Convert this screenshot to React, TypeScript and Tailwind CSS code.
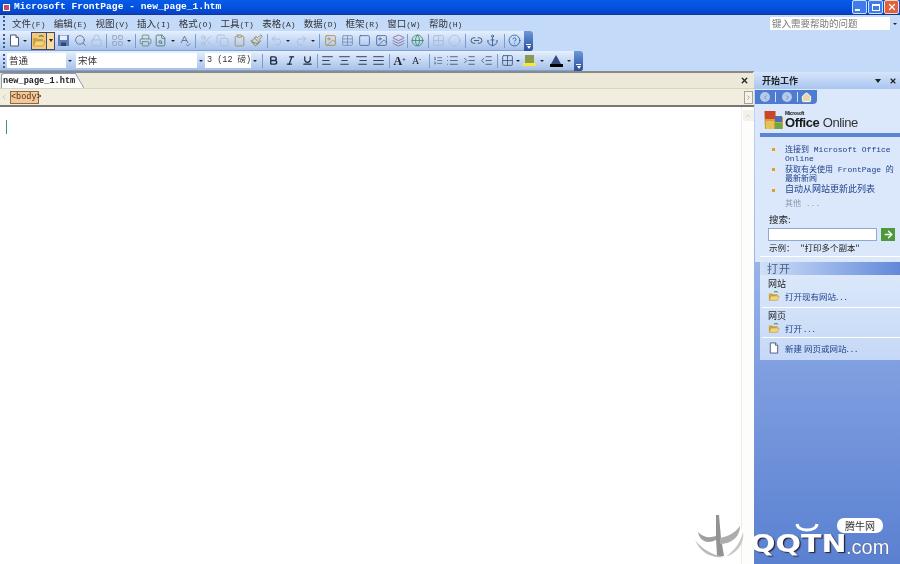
import React from "react";
import {
  Search, Printer, Scissors, Copy, Clipboard, Paintbrush, Undo2, Redo2, Table, Image, Globe,
  Anchor, HelpCircle, Bold, Italic, Underline, AlignLeft, AlignCenter, AlignRight, AlignJustify,
  List, ListOrdered, Indent, Outdent, X, ChevronRight, ChevronLeft, ChevronUp, Home,
  ArrowRight, Layers, Lock, SpellCheck, FileSearch, Grid2x2, Link2, Circle, LayoutGrid, Square,
} from "lucide-react";

const menus = [
  ["文件", "F"], ["编辑", "E"], ["视图", "V"], ["插入", "I"], ["格式", "O"], ["工具", "T"],
  ["表格", "A"], ["数据", "D"], ["框架", "R"], ["窗口", "W"], ["帮助", "H"],
];

const Grip = () => (
  <div className="flex flex-col gap-[2px] w-[3px] ml-[3px] mr-[1px] shrink-0">
    {[0, 1, 2, 3].map((i) => <span key={i} className="w-[2px] h-[2px] bg-[#3a5a9a]" />)}
  </div>
);

const Sep = ({ w = 10 }: { w?: number }) => (
  <div className="flex justify-center shrink-0" style={{ width: w }}>
    <span className="w-px h-[14px] bg-[#7a9ad0]" />
  </div>
);

const Arrow = ({ w = 7 }: { w?: number }) => (
  <div className="flex justify-center items-center shrink-0" style={{ width: w }}>
    <span className="w-0 h-0 border-l-[2px] border-r-[2px] border-t-[2px] border-l-transparent border-r-transparent border-t-[#223]" />
  </div>
);

const Slot = ({ w = 17, children }: { w?: number; children: React.ReactNode }) => (
  <div className="flex justify-center items-center shrink-0 h-[16px]" style={{ width: w }}>{children}</div>
);

const DocIcon = ({ size = 13 }: { size?: number }) => (
  <svg width={size} height={size} viewBox="0 0 13 13">
    <path d="M2.5 1h5.5l2.5 2.5V12h-8z" fill="#fff" stroke="#4a5a78" />
    <path d="M8 1v2.5h2.5" fill="#dfe6f2" stroke="#4a5a78" />
  </svg>
);

const FolderIcon = ({ size = 14 }: { size?: number }) => (
  <svg width={size} height={size} viewBox="0 0 14 14">
    <path d="M1 4h4l1 1h5v2H4L2 12H1z" fill="#c9a548" />
    <path d="M3.5 7H13l-2 5H1.5z" fill="#f4d67a" stroke="#b08a35" strokeWidth=".6" />
    <path d="M7 2.5c2-1.4 3.5-1 4.5.5" fill="none" stroke="#3f8f46" strokeWidth="1.2" />
  </svg>
);

const SaveIcon = () => (
  <svg width="13" height="13" viewBox="0 0 13 13">
    <path d="M1 1h11v11H1z" fill="#5f7fb8" />
    <path d="M3 1.5h7v4.5H3z" fill="#e6eefb" />
    <path d="M4 8.5h5V12H4z" fill="#33466e" />
  </svg>
);

const EndGrip = ({ h = 20 }: { h?: number }) => (
  <div className="w-[9px] flex flex-col justify-end items-center pb-[2px] bg-gradient-to-b from-[#6f98dc] to-[#2a4f9a] rounded-r-[3px] shrink-0" style={{ height: h }}>
    <span className="w-[5px] h-px bg-white mb-px" />
    <span className="w-0 h-0 border-l-[2px] border-r-[2px] border-t-[3px] border-l-transparent border-r-transparent border-t-white" />
  </div>
);

const Combo = ({ w, text, mono }: { w: number; text: string; mono?: boolean }) => (
  <div className="flex items-center shrink-0">
    <div className={`bg-white h-[15px] pl-[2px] leading-[15px] text-[#333] whitespace-nowrap ${mono ? "text-[8.5px] font-['Liberation_Mono','Noto_Sans_CJK_SC',monospace]" : "text-[9.5px]"}`} style={{ width: w }}>{text}</div>
    <Arrow w={8} />
  </div>
);

const ic = { size: 13, strokeWidth: 1.6 };

export default function App() {
  return (
    <div className="relative w-[900px] h-[564px] overflow-hidden bg-[#c3daf9] flex flex-col font-['Noto_Sans_CJK_SC','Liberation_Sans',sans-serif] blur-[0.5px]">
      {/* title bar */}
      <div className="h-[15px] shrink-0 flex items-center bg-gradient-to-b from-[#0a5ae6] via-[#0054e0] to-[#0a3fc4] border-b border-[#0b3a9c]">
        <div className="w-[9px] h-[9px] ml-[2px] mr-[3px] bg-white border border-[#2a4f9a] flex items-center justify-center">
          <span className="w-[5px] h-[5px] bg-[#c64a6a]" />
        </div>
        <span className="text-white font-bold text-[9.6px] font-['Liberation_Mono',monospace] whitespace-pre">Microsoft FrontPage - new_page_1.htm</span>
        <div className="ml-auto flex gap-[1px] pr-[1px]">
          <div className="w-[15px] h-[14px] rounded-[2px] bg-[#3f7cea] border border-[#cfe0ff] flex items-end pl-[2px] pb-[2px]"><span className="w-[5px] h-[2px] bg-white" /></div>
          <div className="w-[15px] h-[14px] rounded-[2px] bg-[#3f7cea] border border-[#cfe0ff] flex items-center justify-center"><span className="w-[8px] h-[7px] border border-white border-t-2" /></div>
          <div className="w-[15px] h-[14px] rounded-[2px] bg-[#e0623c] border border-[#ffd9c8] flex items-center justify-center"><X size={10} strokeWidth={3} color="#fff" /></div>
        </div>
      </div>

      {/* menu bar */}
      <div className="h-[16px] shrink-0 flex items-center">
        <Grip />
        <div className="flex ml-[5px] mt-px">
          {menus.map(([t, k]) => (
            <span key={k} className="w-[41.7px] text-[9.5px] leading-[16px] text-[#333] whitespace-nowrap">{t}<span className="font-['Liberation_Mono',monospace] text-[8px]">({k})</span></span>
          ))}
        </div>
        <div className="ml-auto flex items-center mr-[1px] mt-px">
          <div className="w-[120px] h-[13px] bg-white text-[9.5px] leading-[13px] pl-[2px] text-[#777] whitespace-nowrap">键入需要帮助的问题</div>
          <Arrow w={9} />
        </div>
      </div>

      {/* standard toolbar */}
      <div className="h-[20px] w-[533px] shrink-0 flex items-center bg-gradient-to-b from-[#e6f0fd] to-[#a5c1ea] rounded-r-[3px] border-b border-[#7f9fd6]">
        <Grip />
        <Slot w={14}><DocIcon /></Slot>
        <Arrow w={8} />
        <div className="ml-[2px] w-[16px] h-[18px] bg-[#f8c878] border border-[#3a4a7a] flex items-center justify-center"><FolderIcon /></div>
        <div className="w-[8px] h-[18px] bg-[#fbdc9e] border border-l-0 border-[#3a4a7a] flex items-center justify-center"><span className="w-0 h-0 border-l-[2px] border-r-[2px] border-t-[3px] border-l-transparent border-r-transparent border-t-[#222]" /></div>
        <Slot w={17}><SaveIcon /></Slot>
        <Slot w={16}><Search {...ic} color="#5c7098" /></Slot>
        <Slot w={16}><Lock {...ic} color="#a9bbd8" /></Slot>
        <Sep w={5} />
        <Slot w={16}><LayoutGrid {...ic} color="#8fa2c2" /></Slot>
        <Arrow w={8} />
        <Sep w={5} />
        <Slot w={14}><Printer {...ic} color="#6a8a7a" /></Slot>
        <Slot w={17}><FileSearch {...ic} color="#4a7a6a" /></Slot>
        <Arrow w={7} />
        <Slot w={17}><SpellCheck {...ic} color="#5a6a9a" /></Slot>
        <Sep w={5} />
        <Slot w={16}><Scissors {...ic} color="#a9bbd8" /></Slot>
        <Slot w={17}><Copy {...ic} color="#a9bbd8" /></Slot>
        <Slot w={17}><Clipboard {...ic} color="#a08a50" /></Slot>
        <Slot w={17}><Paintbrush {...ic} color="#8a7a30" /></Slot>
        <Sep w={4} />
        <Slot w={14}><Undo2 {...ic} color="#a9bbd8" /></Slot>
        <Arrow w={10} />
        <Slot w={16}><Redo2 {...ic} color="#a9bbd8" /></Slot>
        <Arrow w={7} />
        <Sep w={6} />
        <Slot w={17}><Image {...ic} color="#b08a40" /></Slot>
        <Slot w={17}><Table {...ic} color="#7a8fb8" /></Slot>
        <Slot w={17}><Square {...ic} color="#4a6aa8" /></Slot>
        <Slot w={17}><Image {...ic} color="#4a6a98" /></Slot>
        <Slot w={16}><Layers {...ic} color="#8a6a98" /></Slot>
        <Sep w={3} />
        <Slot w={16}><Globe {...ic} color="#3a8a6a" /></Slot>
        <Sep w={6} />
        <Slot w={14}><Grid2x2 {...ic} color="#a9bbd8" /></Slot>
        <Slot w={18}><Circle {...ic} color="#a9bbd8" /></Slot>
        <Sep w={5} />
        <Slot w={16}><Link2 {...ic} color="#334a6a" /></Slot>
        <Slot w={17}><Anchor {...ic} color="#3a5a8a" /></Slot>
        <Sep w={6} />
        <Slot w={15}><HelpCircle {...ic} color="#2a5aa8" /></Slot>
        <div className="ml-auto"><EndGrip /></div>
      </div>

      {/* formatting toolbar */}
      <div className="h-[20px] w-[583px] shrink-0 flex items-center bg-gradient-to-b from-[#e6f0fd] to-[#a5c1ea] rounded-r-[3px] border-b border-[#7f9fd6]">
        <Grip />
        <Combo w={59} text="普通" />
        <span className="w-[2px] shrink-0" />
        <Combo w={121} text="宋体" />
        <Combo w={46} text="3 (12 磅)" mono />
        <Sep w={6} />
        <Slot w={17}><Bold size={11} strokeWidth={3} color="#1f2a44" /></Slot>
        <Slot w={17}><Italic size={11} strokeWidth={2.6} color="#1f2a44" /></Slot>
        <Slot w={17}><Underline size={11} strokeWidth={2.6} color="#1f2a44" /></Slot>
        <Sep w={3} />
        <Slot w={17}><AlignLeft {...ic} color="#1f2a44" /></Slot>
        <Slot w={17}><AlignCenter {...ic} color="#1f2a44" /></Slot>
        <Slot w={17}><AlignRight {...ic} color="#1f2a44" /></Slot>
        <Slot w={17}><AlignJustify {...ic} color="#1f2a44" /></Slot>
        <Sep w={4} />
        <Slot w={17}><span className="font-['Liberation_Serif',serif] font-bold text-[12px] text-[#223]">A<sup className="text-[6px]">+</sup></span></Slot>
        <Slot w={17}><span className="font-['Liberation_Serif',serif] text-[10px] text-[#223]">A<sup className="text-[6px]">-</sup></span></Slot>
        <Sep w={8} />
        <Slot w={10}><ListOrdered {...ic} color="#44587c" /></Slot>
        <Slot w={18}><List {...ic} color="#44587c" /></Slot>
        <Slot w={17}><Indent {...ic} color="#44587c" /></Slot>
        <Slot w={17}><Outdent {...ic} color="#44587c" /></Slot>
        <Sep w={5} />
        <Slot w={15}><Grid2x2 {...ic} color="#44587c" /></Slot>
        <Arrow w={6} />
        <Slot w={17}>
          <div className="flex flex-col items-center">
            <span className="w-[9px] h-[8px] bg-[#8a9a50]" />
            <span className="w-[13px] h-[3px] bg-[#f5e83a]" />
          </div>
        </Slot>
        <Arrow w={8} />
        <Slot w={20}>
          <div className="flex flex-col items-center">
            <span className="w-0 h-0 border-l-[5px] border-r-[5px] border-b-[9px] border-l-transparent border-r-transparent border-b-[#334a7a]" />
            <span className="w-[13px] h-[3px] bg-black" />
          </div>
        </Slot>
        <Arrow w={6} />
        <div className="ml-auto"><EndGrip /></div>
      </div>

      {/* main */}
      <div className="flex-1 flex min-h-0">
        {/* editor */}
        <div className="w-[754px] flex flex-col border-t-2 border-[#8b8b86]">
          <div className="h-[16px] bg-[#ece9d8] flex items-end relative border-b border-[#d8d4c0]">
            <div className="h-[15px] w-[74px] ml-[1px] bg-white border-t border-l border-[#8c9ab0] rounded-tl-[3px] text-[8.6px] font-bold leading-[14px] pl-[1px] font-['Liberation_Mono',monospace] text-[#222] whitespace-pre">new_page_1.htm</div>
            <svg width="9" height="15" viewBox="0 0 9 15" className="shrink-0"><path d="M0 0L9 15H0z" fill="#fff" /><path d="M0 0L9 15" stroke="#8c9ab0" fill="none" /></svg>
            <X size={9} strokeWidth={3.5} color="#222" className="absolute right-[5px] top-[3px]" />
          </div>
          <div className="h-[16px] bg-[#f1eee0] flex items-center">
            <ChevronLeft size={8} color="#b5b3a5" />
            <div className="ml-[2px] h-[13px] w-[29px] bg-[#f5c89a] border border-[#8a6a4a] text-[8.5px] leading-[11px] text-center text-[#4a2a10] font-['Liberation_Mono',monospace]">&lt;body&gt;</div>
            <div className="ml-auto w-[9px] h-[13px] mr-[1px] bg-[#f5f3ea] border border-[#a5a399] flex items-center justify-center"><ChevronRight size={7} color="#666" /></div>
          </div>
          <div className="h-[2px] bg-[#77776f]" />
          <div className="flex-1 bg-white flex relative">
            <div className="flex-1 pt-[13px] pl-[6px]"><span className="block w-px h-[14px] bg-[#4a8a8a]" /></div>
            <div className="w-[13px] bg-[#fdfdfb] border-l border-[#eeeeea] flex flex-col items-center pt-[3px]">
              <div className="w-[11px] h-[11px] bg-[#f3f1ea] flex items-center justify-center"><ChevronUp size={8} color="#c5c3b8" /></div>
            </div>
          </div>
        </div>

        {/* task pane */}
        <div className="w-[146px] flex flex-col bg-gradient-to-b from-[#c8dcf8] via-[#7f9fe0] via-[60%] to-[#5a80d0] pl-[6px] pt-[1px]">
          <div className="h-[17px] -ml-[7px] flex items-center bg-gradient-to-b from-[#d5e5fb] to-[#a9c5ef] shrink-0">
            <span className="text-[9px] font-bold text-[#222] ml-[9px] whitespace-nowrap">开始工作</span>
            <span className="ml-auto mr-[8px] w-0 h-0 border-l-[3px] border-r-[3px] border-t-[4px] border-l-transparent border-r-transparent border-t-[#222]" />
            <X size={8} strokeWidth={3.5} color="#222" className="mr-[3px]" />
          </div>
          <div className="bg-[#dbe8fb] shrink-0 h-[173px] -ml-[5px] pl-[5px] flex flex-col">
            <div className="h-[14px] w-[62px] -ml-[5px] bg-[#4e7bd0] rounded-br-[4px] flex items-center mt-[1px] pl-[5px] gap-[3px]">
              <span className="w-[10px] h-[10px] rounded-full bg-[#b5c9e8] flex items-center justify-center"><ChevronLeft size={7} color="#6a88b8" strokeWidth={3} /></span>
              <span className="ml-[2px] w-px h-[10px] bg-[#cfe0fb]" />
              <span className="ml-[3px] w-[10px] h-[10px] rounded-full bg-[#b5c9e8] flex items-center justify-center"><ChevronRight size={7} color="#6a88b8" strokeWidth={3} /></span>
              <span className="ml-[2px] w-px h-[10px] bg-[#cfe0fb]" />
              <Home size={11} color="#fff" fill="#e8d8a8" />
            </div>
            <div className="flex items-center pl-[4px] mt-[5px] h-[22px]">
              <svg width="20" height="22" viewBox="0 0 20 22" className="shrink-0">
                <path d="M0 2h12v6h7v12H1z" fill="#d2a23a" />
                <path d="M1 2h10v8H1z" fill="#c9452e" />
                <path d="M11 7h7v6h-7z" fill="#4a6fb8" />
                <path d="M2 12h8v8H2z" fill="#e5c25a" />
                <path d="M11 14h7v6h-7z" fill="#6aa84a" />
              </svg>
              <div className="flex flex-col ml-[1px] text-[#1a1a1a] font-['Liberation_Sans',sans-serif] tracking-[-0.4px]">
                <span className="text-[5px] leading-[5px] font-bold">Microsoft</span>
                <span className="text-[13px] leading-[14px] whitespace-nowrap"><b className="font-semibold">Office</b> <span className="text-[#333]">Online</span></span>
              </div>
            </div>
            <div className="h-[4px] bg-[#5b85d2] mt-[2px]" />
            <div className="mt-[8px] pl-[25px] text-[8px] leading-[9px] text-[#21438c] relative whitespace-nowrap font-['Liberation_Mono','Noto_Sans_CJK_SC',monospace]">
              <span className="absolute left-[12px] top-[3px] w-[3px] h-[3px] bg-[#e89a2a]" />
              <div className="h-[20px]">连接到 Microsoft Office<br />Online</div>
              <span className="absolute left-[12px] top-[23px] w-[3px] h-[3px] bg-[#e89a2a]" />
              <div className="h-[21px]">获取有关使用 FrontPage 的<br />最新新闻</div>
              <span className="absolute left-[12px] top-[44px] w-[3px] h-[3px] bg-[#e89a2a]" />
              <div className="h-[10px] text-[9px]">自动从网站更新此列表</div>
              <div className="h-[14px] pt-[3px] text-[#8a96b0]">其他 ...</div>
            </div>
            <div className="pl-[9px] mt-[3px] text-[9.5px] leading-[12px] text-[#222]">搜索:</div>
            <div className="pl-[8px] mt-[3px] flex items-center">
              <div className="w-[109px] h-[13px] bg-white border border-[#8fa8d4]" />
              <div className="ml-[4px] w-[14px] h-[13px] bg-[#4c9a3a] flex items-center justify-center"><ArrowRight size={11} strokeWidth={3} color="#fff" /></div>
            </div>
            <div className="pl-[9px] mt-[1px] text-[8.5px] leading-[11px] text-[#222] whitespace-nowrap">示例：<span className="ml-[6px]">"打印多个副本"</span></div>
            <div className="h-px bg-white mt-[3px]" />
          </div>
          <div className="h-[13px] bg-gradient-to-r from-[#d0e0f8] to-[#6388d8] shrink-0 text-[11px] tracking-[1px] leading-[13px] pl-[7px] text-[#4a6080]">打开</div>
          <div className="bg-gradient-to-b from-[#dbe8fb] to-[#c5d8f6] shrink-0 h-[85px] text-[8.5px] text-[#222] pl-[8px] flex flex-col">
            <div className="mt-[3px] leading-[11px] text-[9px]">网站</div>
            <div className="flex items-center h-[14px] text-[#21438c]"><FolderIcon size={12} /><span className="ml-[5px] whitespace-nowrap">打开现有网站. . .</span></div>
            <div className="h-px bg-white mt-[4px] -ml-[6px]" />
            <div className="mt-[2px] leading-[11px] text-[9px]">网页</div>
            <div className="flex items-center h-[14px] text-[#21438c]"><FolderIcon size={12} /><span className="ml-[5px]">打开 . . .</span></div>
            <div className="h-px bg-white mt-[2px] -ml-[6px]" />
            <div className="flex items-center h-[14px] mt-[3px] text-[#21438c]"><DocIcon size={12} /><span className="ml-[5px] whitespace-nowrap">新建 网页或网站. . .</span></div>
          </div>
        </div>
      </div>

      {/* watermark */}
      <div className="absolute left-[690px] top-[512px] w-[205px] h-[50px]">
        <svg width="56" height="48" viewBox="0 0 56 48" className="absolute left-0 top-0">
          <ellipse cx="29" cy="24" rx="24" ry="21" fill="#fff" />
          <g opacity=".8">
            <path d="M26 3L29 3L31 26L34 44L27 44L26 26z" fill="#777" />
            <path d="M8 20C14 26 20 26 26 24L26 28C18 32 10 30 8 20z" fill="#888" />
            <path d="M30 26C38 24 44 22 50 14C50 26 40 32 30 32z" fill="#999" />
            <path d="M5 28C10 40 22 47 34 45C24 43 12 38 5 28z" fill="#aaa" />
            <path d="M53 20C55 32 46 42 36 45C44 38 50 32 53 20z" fill="#bbb" />
          </g>
        </svg>
        <span className="absolute left-[60px] top-[23px] origin-left scale-x-[1.2] text-white font-bold text-[25px] leading-[18px] font-['DejaVu_Sans',sans-serif] [text-shadow:1px_1px_1px_#223]">QQTN</span>
        <span className="absolute left-[156px] top-[26px] text-white text-[20px] leading-[18px] font-['Liberation_Sans',sans-serif] [text-shadow:0_0_1px_#334]">.com</span>
        <span className="absolute left-[147px] top-[6px] h-[15px] w-[46px] bg-white rounded-[7px] text-[10px] leading-[15px] text-center text-[#333]">腾牛网</span>
        <svg width="24" height="10" viewBox="0 0 24 10" className="absolute left-[105px] top-[11px]"><path d="M2 1c1 8 19 8 20 0" stroke="#fff" strokeWidth="3" fill="none" /></svg>
      </div>
    </div>
  );
}
